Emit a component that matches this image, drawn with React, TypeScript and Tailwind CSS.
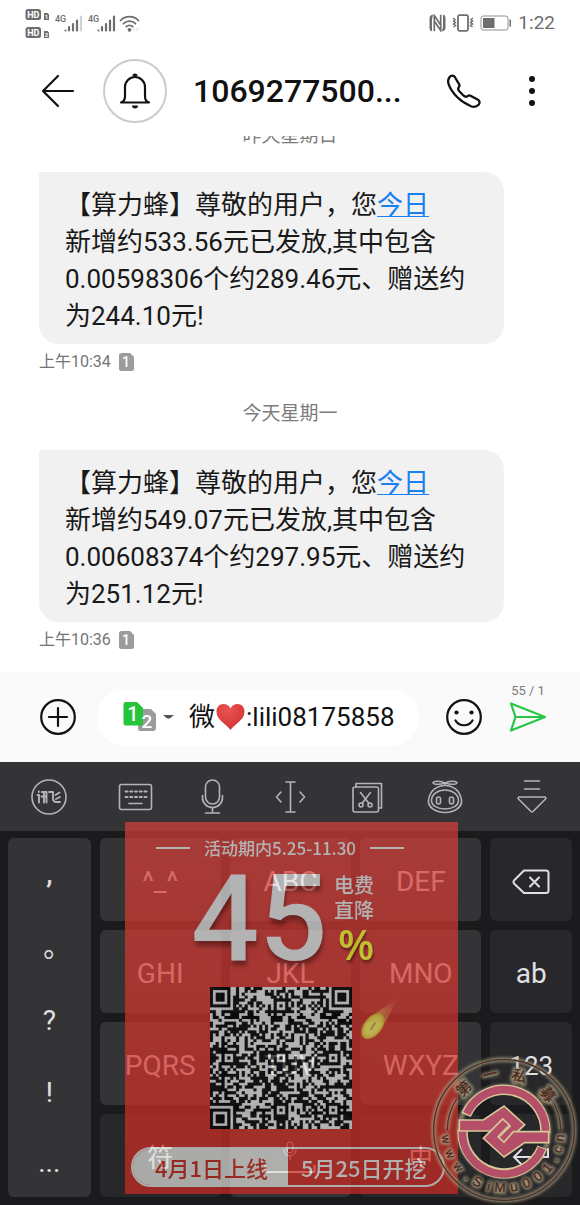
import React from "react";

const QR_SIZE = 49;

function isQrDark(x: number, y: number, noise: number): boolean {
  const finders = [[3, 3], [45, 3], [3, 45]];
  for (const [cx, cy] of finders) {
    const d = Math.max(Math.abs(x - cx), Math.abs(y - cy));
    if (d <= 4) return d !== 2 && d !== 4;
  }
  const marks = [6, 24, 42];
  for (const cx of marks) {
    for (const cy of marks) {
      const d = Math.max(Math.abs(x - cx), Math.abs(y - cy));
      if (d <= 2) return d !== 1;
    }
  }
  if (x === 6 || y === 6) return (x + y) % 2 === 0;
  return noise > 0.5;
}

function buildQrPath(): string {
  let seed = 20210401;
  let path = "";
  for (let y = 0; y < QR_SIZE; y++) {
    for (let x = 0; x < QR_SIZE; x++) {
      seed = (seed * 48271) % 2147483647;
      if (isQrDark(x, y, seed / 2147483647)) path += `M${x} ${y}h1v1h-1z`;
    }
  }
  return path;
}

const qrPath = buildQrPath();

function StatusBar() {
  return (
    <div className="flex h-[45px] items-center justify-between pl-6 pr-[25px] text-[#6e6e6e]">
      <svg width="118" height="34" viewBox="0 0 118 34" aria-hidden="true">
        <g fill="#6e6e6e">
          <rect x="1.500" y="3" width="15.500" height="11" rx="2.500" />
          <rect x="1.500" y="21" width="15.500" height="11" rx="2.500" />
          <path d="M20 7h3.500l1.500 1.500V14h-5zM20 25h3.500l1.500 1.500V32h-5z" />
        </g>
        <g fill="#fff" fontFamily="Roboto, sans-serif" fontWeight="700" fontSize="9" textAnchor="middle">
          <text x="9.300" y="11.800">HD</text>
          <text x="9.300" y="29.800">HD</text>
          <text x="22.500" y="13" fontSize="6">1</text>
          <text x="22.500" y="31" fontSize="6">2</text>
        </g>
        <g fill="#6e6e6e" fontFamily="Roboto, sans-serif" fontWeight="500" fontSize="9">
          <text x="31" y="16">4G</text>
          <text x="64" y="16">4G</text>
        </g>
        <g stroke="#6e6e6e" strokeWidth="2.200" strokeLinecap="round">
          <path d="M41.500 24.500v0M45 24.500v-3.500M49 24.500v-6.500M53 24.500v-10" />
          <path d="M57 24.500V10.500" stroke="#d2d2d2" />
          <path d="M74.500 24.500v0M78 24.500v-3.500M82 24.500v-6.500M86 24.500v-10M90 24.500V10.500" />
        </g>
        <g fill="none" stroke="#6e6e6e" strokeWidth="1.800" strokeLinecap="round">
          <path d="M96.500 14.500a12.500 12.500 0 0 1 18 0M99.500 17.700a8.500 8.500 0 0 1 12 0M102.300 20.700a4.500 4.500 0 0 1 6.400 0" />
        </g>
        <circle cx="105.500" cy="23.800" r="1.900" fill="#6e6e6e" />
        <path d="m110.500 22-1.500 1.500 1.500 1.500m2-3 1.500 1.500-1.500 1.500" fill="none" stroke="#ccc" />
      </svg>
      <div className="flex items-center gap-[6px]">
        <svg width="17" height="18" viewBox="0 0 17 18" aria-hidden="true">
          <path d="M4 .8Q.5 1 .5 4.500v9Q.5 17 3 17.200V5.500zM13 17.200q3.500-.2 3.500-3.700v-9Q16.500 1 14 .8v11.700z" fill="#6e6e6e" />
          <path d="M5.300 17.200V1.500l6.400 9.500V.8M5.300 7l6.400 9.500V8" fill="none" stroke="#6e6e6e" strokeWidth="1.700" />
        </svg>
        <svg width="22" height="18" viewBox="0 0 22 18" fill="none" stroke="#6e6e6e" aria-hidden="true">
          <rect x="6" y="1.200" width="10" height="15.600" rx="1.500" strokeWidth="1.800" />
          <path d="m1 4 2 1.500L1.500 7l2 1.500L1.500 10l2 1.500L1.500 13M21 4l-2 1.500L20.500 7l-2 1.500 2 1.500-2 1.500 2 1.500" strokeWidth="1.500" />
        </svg>
        <svg width="32" height="16" viewBox="0 0 32 16" aria-hidden="true">
          <rect x="1" y="1" width="27" height="14" rx="2.500" fill="none" stroke="#909090" />
          <path d="M3 3h11.500v10H3zM29.500 4.500h1.500v7h-1.500z" fill="#6e6e6e" />
        </svg>
        <span className="text-[19px] leading-6">1:22</span>
      </div>
    </div>
  );
}

function Header() {
  return (
    <header className="flex h-[91px] items-center pl-10 pr-[29px] text-[#111]">
      <button aria-label="返回" className="flex w-[63px]">
        <svg width="36" height="36" viewBox="0 0 36 36" fill="none" stroke="currentColor" strokeWidth="2.200" strokeLinecap="round" strokeLinejoin="round">
          <path d="M33 18H3M18 3 3 18l15 15" />
        </svg>
      </button>
      <div className="flex h-16 w-16 shrink-0 items-center justify-center rounded-full border-2 border-[#cbcbcb]">
        <svg width="34" height="38" viewBox="0 0 34 38" fill="none" stroke="currentColor" strokeWidth="2.200" strokeLinejoin="round" aria-hidden="true">
          <path d="M3 30.500c3-1 4-3 4-6V15a10 10 0 0 1 20 0v9.500c0 3 1 5 4 6z" />
          <path d="M14.500 4a2.500 2.500 0 0 1 5 0zM14 33.500h6a3 3 0 0 1-6 0z" fill="currentColor" stroke="none" />
        </svg>
      </div>
      <h1 className="ml-[26px] flex-1 whitespace-nowrap text-[32px] font-medium leading-10">1069277500...</h1>
      <button aria-label="拨打电话" className="mr-[30px]">
        <svg width="38" height="38" viewBox="0 0 38 38" fill="none" stroke="currentColor" strokeWidth="2.300" strokeLinejoin="round">
          <path d="M4.500 5.200C6 3.300 8.500 3 9.800 5l4.400 7.300c.6 1 .3 1.900-.4 2.800-1 1.400-.9 2.400.1 3.700l4.700 4.900c1.400 1.200 2.400 1.500 3.800.6 1-.8 2-1.200 3.100-.6l7.500 4c2 1.200 2 3.600.6 5-1.900 1.900-4.600 2.700-7.600 1.500C15.500 30 6.800 21.300 3.600 12.200c-.8-2.600-.7-5 .9-7z" />
        </svg>
      </button>
      <button aria-label="更多" className="flex w-[38px] justify-center">
        <svg width="8" height="32" viewBox="0 0 8 32" fill="currentColor">
          <circle cx="4" cy="4" r="3" /><circle cx="4" cy="16" r="3" /><circle cx="4" cy="28" r="3" />
        </svg>
      </button>
    </header>
  );
}

function DateLine({ children }: { children: React.ReactNode }) {
  return <div className="text-center text-[19px] leading-8 text-[#7c7c7c]">{children}</div>;
}

function Message({ lines, time }: { lines: string[]; time: string }) {
  return (
    <article className="mt-5 pl-[39px]">
      <div className="w-[86%] rounded-[20px] rounded-tl-[2px] bg-[#f1f1f1] pb-[9px] pl-[26px] pt-[15px] text-[26px] leading-[37px] text-[#191919]">
        <p className="whitespace-nowrap">【算力蜂】尊敬的用户，您<a href="#today" className="text-[#1a7ff0] underline decoration-1 underline-offset-2">今日</a></p>
        {lines.map((line) => <p key={line} className="whitespace-nowrap">{line}</p>)}
      </div>
      <div className="mt-[6px] flex h-6 items-center gap-2 text-[16px] text-[#747474]">
        <span>{time}</span>
        <svg width="15" height="18" viewBox="0 0 15 18" aria-label="SIM 1">
          <path d="M2.500 0H11l4 4v11.500q0 2.500-2.500 2.500h-10Q0 18 0 15.500v-13Q0 0 2.500 0z" fill="#9c9c9c" />
          <text x="7" y="14" fill="#fff" fontFamily="Roboto, sans-serif" fontSize="14" fontWeight="500" textAnchor="middle">1</text>
        </svg>
      </div>
    </article>
  );
}

function Composer() {
  return (
    <form className="flex h-[90px] items-center bg-[#fafafa] pl-[39px] pr-8 text-[#111]" onSubmit={(e) => e.preventDefault()}>
      <button type="button" aria-label="添加" className="mr-5">
        <svg width="38" height="38" viewBox="0 0 38 38" fill="none" stroke="currentColor" strokeWidth="2.200" strokeLinecap="round">
          <circle cx="19" cy="19" r="16.800" /><path d="M19 10v18M10 19h18" />
        </svg>
      </button>
      <div className="flex h-[57px] min-w-0 flex-1 items-center rounded-full bg-white pl-[26px] text-[26px]">
        <button type="button" aria-label="选择 SIM 卡" className="mr-[14px]">
          <svg width="52" height="32" viewBox="0 0 52 32">
            <path d="M17 8h11l5 5v14q0 3-3 3H17q-2 0-2-3V10q0-2 2-2z" fill="#9c9c9c" />
            <path d="M3 1h11l6 6v15q0 2.500-2.500 2.500H3q-2.500 0-2.500-2.500V3.500Q.5 1 3 1z" fill="#25c43b" />
            <g fill="#fff" fontFamily="Roboto, sans-serif" fontWeight="500" textAnchor="middle">
              <text x="10" y="20" fontSize="20">1</text><text x="24" y="27" fontSize="19">2</text>
            </g>
            <path d="M40 14h11l-3.500 3q-2 1.500-4 0z" fill="#555" />
          </svg>
        </button>
        <label htmlFor="message" className="leading-9">微</label>
        <svg width="31" height="28" viewBox="0 0 31 28" className="shrink-0" aria-label="红心">
          <defs>
            <radialGradient id="heart" cx=".4" cy=".25" r=".8"><stop offset="0" stopColor="#e95350" /><stop offset="1" stopColor="#cf3233" /></radialGradient>
          </defs>
          <path d="M15.500 27C12 21.500 1.500 17.500 1.500 8.500 1.500 4 4.500 1 8.500 1c3 0 5.800 1.700 7 4.500C16.700 2.700 19.500 1 22.500 1c4 0 7 3 7 7.500 0 9-10.500 13-14 18.500z" fill="url(#heart)" />
        </svg>
        <input id="message" defaultValue=":lili08175858" className="h-9 w-0 min-w-0 flex-1 bg-transparent outline-none" />
      </div>
      <button type="button" aria-label="表情" className="ml-[26px]">
        <svg width="38" height="38" viewBox="0 0 38 38" fill="none" stroke="currentColor" strokeWidth="2.200" strokeLinecap="round">
          <circle cx="19" cy="19" r="16.800" /><path d="M10.500 22.500c3.500 6.300 13.500 6.300 17 0" />
          <g fill="currentColor" stroke="none"><circle cx="11.500" cy="14.500" r="2.100" /><circle cx="26.500" cy="14.500" r="2.100" /></g>
        </svg>
      </button>
      <div className="ml-[25px] flex w-10 flex-col items-center pb-[22px]">
        <span className="whitespace-nowrap text-[13px] leading-[22px] text-[#7c7c7c]">55 / 1</span>
        <button type="submit" aria-label="发送">
          <svg width="38" height="30" viewBox="0 0 38 30" fill="none" stroke="#28c643" strokeWidth="2.200" strokeLinejoin="round" strokeLinecap="round" className="block">
            <path d="M2 1.500 36 15 2 28.500 6.500 15zM6.500 15H35" />
          </svg>
        </button>
      </div>
    </form>
  );
}

const tools: { name: string; icon: React.ReactNode }[] = [
  {
    name: "讯飞",
    icon: (
      <>
        <circle cx="20" cy="20" r="17" />
        <path d="M9.800 14.500v.5M8.500 18h1.500v7.500M12.800 15h4.700v10.500M15 15v10.500M12.500 19.500H17M20 15h4v6.500q0 3.500 3.500 3.500H31M30.500 15.500l-4 2.500M31 20l-4 2" strokeWidth="1.900" />
      </>
    ),
  },
  {
    name: "键盘",
    icon: (
      <>
        <rect x="3.500" y="7.500" width="32" height="25" rx="2" />
        <path d="M9.500 14.500h21M9.500 20h21" strokeDasharray="2 2.750" strokeWidth="2" />
        <path d="M13 26.500h13" />
      </>
    ),
  },
  {
    name: "语音",
    icon: (
      <>
        <rect x="12.500" y="3" width="14" height="24" rx="7" />
        <path d="M9.500 18.500v2a10 10 0 0 0 20 0v-2M19.500 31v5M12.500 36h14" />
      </>
    ),
  },
  { name: "光标", icon: <path d="M10 15l-4.500 5 4.500 5M29 15l4.500 5-4.500 5M15 5h9M15 35h9M19.500 5v30" /> },
  {
    name: "剪贴板",
    icon: (
      <>
        <path d="M8 10V6.500h25.500V31H31" />
        <rect x="5" y="10" width="25.500" height="25" rx="2" />
        <path d="m12.500 15.500 8.500 11M22.500 15.500l-8.500 11" />
        <circle cx="13" cy="28" r="2" /><circle cx="22" cy="28" r="2" />
      </>
    ),
  },
  {
    name: "助手",
    icon: (
      <>
        <path d="M20 6c-4-2-11-2.500-12 0 1 2 8 1.500 12 0zM20 6c4-2 11-2.500 12 0-1 2-8 1.500-12 0z" />
        <path d="M20 6v2M3.500 23C5 13.500 12 8.500 20 8.500s15 5 16.500 14.500c1 7-7 12.500-16.500 12.500S2.500 30 3.500 23z" />
        <path d="M6.500 23.500C6.500 17 13 13 20 13s13.500 4 13.500 10.500c0 5-6 8.500-13.500 8.500S6.500 28.500 6.500 23.500z" />
        <rect x="11.500" y="20" width="4" height="7" rx="2" /><rect x="24.500" y="20" width="4" height="7" rx="2" />
      </>
    ),
  },
  { name: "收起键盘", icon: <path d="M12.500 4h15M12.500 12h15M7 20h26q1.500 1 .5 2L21 34.500q-1 1-2 0L6.500 22q-1-1 .5-2z" /> },
];

function Key({ children, label, dark }: { children: React.ReactNode; label?: string; dark?: boolean }) {
  return (
    <button
      aria-label={label}
      className={`flex h-[83px] items-center justify-center rounded-[6px] pt-1 text-[28px] leading-9 text-[#e0e0e4] ${dark ? "bg-[#28282a]" : "bg-[#343436]"}`}
    >
      {children}
    </button>
  );
}

function Keyboard() {
  return (
    <section className="relative bg-[#1b1b1d]">
      <div className="grid h-[69px] grid-cols-[97fr_77fr_78fr_77fr_77fr_77fr_97fr] items-center justify-items-center bg-[#343436]">
        {tools.map((tool) => (
          <button key={tool.name} aria-label={tool.name}>
            <svg width="40" height="40" viewBox="0 0 40 40" fill="none" stroke="#b4b4b8" strokeWidth="1.600" strokeLinecap="round" strokeLinejoin="round">{tool.icon}</svg>
          </button>
        ))}
      </div>
      <div className="grid grid-cols-[83fr_122fr_122fr_122fr_82fr] gap-[9px] px-2 pb-[9px] pt-[7px]">
        <div className="row-span-4 grid grid-rows-5 rounded-[6px] bg-[#343436] text-[28px] text-[#e0e0e4]">
          <button className="font-medium">,</button>
          <button className="pl-4 pt-1">。</button>
          <button className="pt-2">?</button>
          <button className="pt-2">!</button>
          <button className="pt-1">...</button>
        </div>
        <Key>^_^</Key>
        <Key>ABC</Key>
        <Key>DEF</Key>
        <Key dark label="删除">
          <svg width="38" height="26" viewBox="0 0 38 26" fill="none" stroke="#e0e0e4" strokeWidth="2" strokeLinejoin="round" strokeLinecap="round">
            <path d="M12 1.500h22q2.500 0 2.500 2.500v17.500q0 2.500-2.500 2.500H12L2 14.500q-1-1.500 0-3zM18 8.500l9 9M27 8.500l-9 9" />
          </svg>
        </Key>
        <Key>GHI</Key>
        <Key>JKL</Key>
        <Key>MNO</Key>
        <Key dark>ab</Key>
        <Key>PQRS</Key>
        <Key>TUV</Key>
        <Key>WXYZ</Key>
        <Key dark><span className="text-[26px]">123</span></Key>
        <Key dark><span className="text-[26px]">符</span></Key>
        <Key label="空格">
          <svg width="52" height="44" viewBox="0 0 52 44" fill="none" stroke="#e0e0e4">
            <rect x="23" y="6" width="6" height="11" rx="3" /><path d="M20 13v1a6 6 0 0 0 12 0v-1M26 20v4" />
            <path d="M1.500 29v7h49v-7" strokeWidth="2" />
          </svg>
        </Key>
        <Key dark><span className="text-[24px]">中</span></Key>
        <Key dark label="换行">
          <svg width="38" height="22" viewBox="0 0 38 22" fill="none" stroke="#e0e0e4" strokeWidth="2"><path d="M36 1v9H2M10 2 2 10l8 8" /></svg>
        </Key>
      </div>
      <Poster />
      <Seal />
    </section>
  );
}

function Poster() {
  return (
    <aside className="pointer-events-none absolute left-[125px] top-[60px] h-[372px] w-[333px] bg-linear-to-b from-[#d73f39] to-[#cf2a22] pt-4 font-['Noto_Sans_CJK_SC',sans-serif] text-[#e7e7e7] opacity-[.71]">
      <div className="flex items-center gap-[14px] pl-[31px] text-[17px] leading-5">
        <i className="h-[2px] w-[34px] bg-current" />
        <span className="whitespace-nowrap font-medium">活动期内5.25-11.30</span>
        <i className="h-[2px] w-[34px] bg-current" />
      </div>
      <div className="mt-[14px] flex h-[98px] pl-[66px]">
        <strong className="w-[143px] font-[Roboto] text-[120px] font-medium leading-[94px] drop-shadow-[1px_5px_2px_rgba(50,0,0,.5)]">45</strong>
        <div className="text-[20px] font-medium leading-[25px]">
          <p>电费</p>
          <p>直降</p>
          <p className="pl-1 font-['Open_Sans'] text-[42px] font-semibold leading-[44px] text-[#fafa30] drop-shadow-[1px_3px_1px_rgba(50,0,0,.5)]">%</p>
        </div>
      </div>
      <svg viewBox="0 0 49 49" className="ml-[85px] mt-[17px] block h-[142px] w-[142px]" role="img" aria-label="二维码">
        <path d="M0 0h49v49H0z" fill="#e7e7e7" /><path d={qrPath} fill="#070707" stroke="#070707" strokeWidth=".08" />
      </svg>
      <div className="ml-[6px] mt-[18px] flex h-10 w-[314px] overflow-hidden rounded-full border-2 border-[#e0e0de] text-[22px] leading-9">
        <span className="w-1/2 bg-[#e0e0de] pl-[22px] font-medium text-[#c52a20]">4月1日上线</span>
        <span className="w-1/2 whitespace-nowrap pl-[13px] font-medium">5月25日开挖</span>
      </div>
      <svg width="44" height="48" viewBox="0 0 44 48" className="absolute left-[233px] top-[175px]" aria-hidden="true">
        <defs>
          <linearGradient id="tail" x1="0" y1="1" x2="1" y2="0"><stop offset="0" stopColor="#f4b84c" stopOpacity=".9" /><stop offset="1" stopColor="#f08050" stopOpacity="0" /></linearGradient>
          <radialGradient id="coin"><stop offset="0" stopColor="#fff27a" /><stop offset=".7" stopColor="#f5e052" /><stop offset="1" stopColor="#dcae36" /></radialGradient>
        </defs>
        <path d="M18 16 40 1 27 26z" fill="url(#tail)" />
        <ellipse cx="15" cy="29" rx="9" ry="15" transform="rotate(38 15 29)" fill="url(#coin)" />
        <path d="m13 32 4-6" stroke="#cdb040" strokeWidth="2.500" strokeLinecap="round" />
      </svg>
    </aside>
  );
}

const sealGlyphs: [string, number, number, number][] = [
  ["第", 226, 172, 44], ["一", 256, 170, 44], ["私", 286, 167, 44], ["募", 321, 168, 44],
  ["w", 171, 174, 34], ["w", 156, 174, 34], ["w", 141, 174, 34], [".", 128, 174, 34],
  ["S", 117, 174, 40], ["i", 105, 174, 40], ["M", 94, 172, 40], ["u", 80, 172, 40],
  ["0", 67, 172, 40], ["0", 54, 172, 40], ["1", 41, 172, 40], [".", 30, 170, 34],
  ["c", 20, 170, 38], ["n", 8, 168, 38],
];

function Seal() {
  return (
    <svg width="150" height="155" viewBox="0 0 450 465" className="pointer-events-none absolute bottom-0 right-0" role="img" aria-label="第一私募 www.SiMu001.cn">
      <defs>
        <filter id="glow" x="-20%" y="-20%" width="140%" height="140%"><feGaussianBlur stdDeviation="5" /></filter>
        <filter id="textGlow" x="-60%" y="-60%" width="220%" height="220%"><feGaussianBlur stdDeviation="4" /></filter>
      </defs>
      <g fill="none" stroke="#b3a684" strokeWidth="14" opacity=".7" filter="url(#glow)">
        <circle cx="222" cy="237" r="211" />
        <path d="M52 238A170 170 0 0 1 80 144M392 238A170 170 0 0 0 366 147" />
        <circle cx="222" cy="241" r="134" />
      </g>
      <g fill="none" stroke="#49302a" strokeWidth="4">
        <circle cx="222" cy="237" r="211" />
        <path d="M52 238A170 170 0 0 1 80 144M392 238A170 170 0 0 0 366 147" />
      </g>
      <g fontFamily="'Liberation Sans', 'Noto Sans CJK SC', sans-serif" textAnchor="middle">
        {sealGlyphs.map(([ch, angle, r, size], i) => {
          const rad = (angle * Math.PI) / 180;
          const x = 222 + r * Math.cos(rad);
          const y = 237 + r * Math.sin(rad);
          const turn = angle > 180 ? angle - 270 : angle - 90;
          return (
            <g key={i} transform={`translate(${x} ${y}) rotate(${turn})`} fontSize={size}>
              <text y="14" fill="#b3a684" stroke="#b3a684" strokeWidth="11" opacity=".8" filter="url(#textGlow)" aria-hidden="true">{ch}</text>
              <text y="14" fill="#4a2720" stroke="#4a2720">{ch}</text>
            </g>
          );
        })}
      </g>
      <g fill="none">
        <path d="M108 192A124 124 0 0 1 346 246M98 236A124 124 0 0 0 337 289" stroke="#d6c797" strokeWidth="31" />
        <path d="M110 188A124 124 0 0 1 346 252M98 232A124 124 0 0 0 336 292" stroke="#b54e68" strokeWidth="23" />
      </g>
      <g fill="#b54e68" stroke="#d6c797" strokeWidth="5">
        <path d="M88 207H160L222 165l62 56-60 58-20-18 36-35-18-16-28 30H88z" />
        <path d="M356 275H284l-62 43-62-56 58-58 20 18-34 35 18 17 28-32H356z" />
      </g>
    </svg>
  );
}

export default function App() {
  return (
    <div className="w-full overflow-hidden bg-white font-['Roboto','Noto_Sans_CJK_SC',sans-serif]">
      <StatusBar />
      <Header />
      <main className="overflow-hidden pb-5">
        <div className="-mt-4"><DateLine>昨天星期日</DateLine></div>
        <Message lines={["新增约533.56元已发放,其中包含", "0.00598306个约289.46元、赠送约", "为244.10元!"]} time="上午10:34" />
        <div className="mt-6"><DateLine>今天星期一</DateLine></div>
        <Message lines={["新增约549.07元已发放,其中包含", "0.00608374个约297.95元、赠送约", "为251.12元!"]} time="上午10:36" />
      </main>
      <Composer />
      <Keyboard />
    </div>
  );
}
